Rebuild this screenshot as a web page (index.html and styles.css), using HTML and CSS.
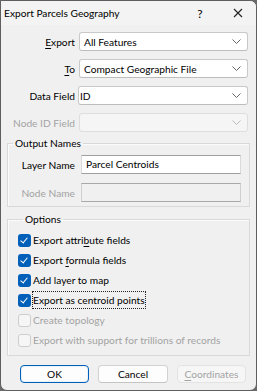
FILE: index.html
```html
<!DOCTYPE html>
<html lang="en">
<head>
    <meta charset="UTF-8">
    <meta name="viewport" content="width=device-width, initial-scale=1.0">
    <title>Export Parcels Geography</title>
    <link rel="stylesheet" href="styles.css">
</head>
<body>
    <div class="window">
        <div class="titlebar">
            <span class="title">Export Parcels Geography</span>
            <span class="help">?</span>
            <span class="close">
                <svg width="10" height="10" viewBox="0 0 10 10"><path d="M1 1L9 9M9 1L1 9" stroke="#222" stroke-width="1.1" fill="none"/></svg>
            </span>
        </div>
        <div class="content">
            <div class="fields">
                <label class="lbl"><u>E</u>xport</label>
                <div class="combo"><span>All Features</span><svg class="chev" width="9" height="5" viewBox="0 0 9 5"><path d="M0.5 0.5L4.5 4.5L8.5 0.5" stroke="#666" fill="none"/></svg></div>

                <label class="lbl"><u>T</u>o</label>
                <div class="combo"><span>Compact Geographic File</span><svg class="chev" width="9" height="5" viewBox="0 0 9 5"><path d="M0.5 0.5L4.5 4.5L8.5 0.5" stroke="#666" fill="none"/></svg></div>

                <label class="lbl">Data Field</label>
                <div class="combo tight"><span>ID</span><svg class="chev" width="9" height="5" viewBox="0 0 9 5"><path d="M0.5 0.5L4.5 4.5L8.5 0.5" stroke="#666" fill="none"/></svg></div>

                <label class="lbl disabled">Node ID Field</label>
                <div class="combo off"><span></span><svg class="chev" width="9" height="5" viewBox="0 0 9 5"><path d="M0.5 0.5L4.5 4.5L8.5 0.5" stroke="#bbb" fill="none"/></svg></div>
            </div>

            <fieldset class="group names">
                <legend>Output Names</legend>
                <div class="name-grid">
                    <label class="lbl">Layer Name</label>
                    <div class="textbox">Parcel Centroids</div>
                    <label class="lbl disabled">Node Name</label>
                    <div class="textbox off"></div>
                </div>
            </fieldset>

            <fieldset class="group options">
                <legend>Options</legend>
                <div class="check on"><span class="box"></span><span>Export attri<u>b</u>ute fields</span></div>
                <div class="check on"><span class="box"></span><span>Export <u>f</u>ormula fields</span></div>
                <div class="check on"><span class="box"></span><span>Add layer to map</span></div>
                <div class="check on"><span class="box"></span><span class="focus">Export as centroid points</span></div>
                <div class="check off"><span class="box"></span><span>Create topology</span></div>
                <div class="check off"><span class="box"></span><span>Export with support for trillions of records</span></div>
            </fieldset>

            <div class="buttons">
                <button class="btn default">OK</button>
                <button class="btn">Cancel</button>
                <button class="btn off"><u>C</u>oordinates</button>
            </div>
        </div>
    </div>
</body>
</html>
```

FILE: styles.css
```css
* { margin: 0; padding: 0; box-sizing: border-box; }
body {
    background: #6a6a6a;
    font-family: Lato, "Noto Sans", sans-serif;
    font-size: 10.2px;
    color: #000;
}
.window {
    width: 257px;
    height: 391px;
    background: #f0f0f0;
    border: 1px solid #5e5e5e;
    border-radius: 0 7px 7px 7px;
    overflow: hidden;
    display: flex;
    flex-direction: column;
}
.titlebar {
    height: 24px;
    flex: none;
    display: flex;
    align-items: center;
    background: #f3f3f3;
    padding-left: 3px;
}
.title { flex: 1; line-height: 16px; }
.help { width: 12px; margin-right: 27px; text-align: center; font-size: 12px; }
.close { width: 10px; height: 10px; margin-right: 13px; display: flex; }
.content { flex: 1; display: flex; flex-direction: column; padding-top: 7px; }

/* top fields */
.fields {
    display: grid;
    grid-template-columns: 74px 1fr;
    column-gap: 4px;
    row-gap: 8px;
    padding-right: 8px;
    align-items: center;
}
.lbl { text-align: right; line-height: 16px; white-space: nowrap; }
.disabled { color: #a3a3a3; }
u { text-decoration-thickness: 1px; text-underline-offset: 2px; }
.combo {
    height: 19px;
    background: #fff;
    border: 1px solid #c9c9c9;
    border-bottom-color: #bdbdbd;
    border-radius: 3px;
    display: flex;
    align-items: center;
    padding: 0 6px 0 4px;
}
.combo span { flex: 1; line-height: 16px; }
.combo.tight { padding-left: 1px; margin-left: -1px; }
.combo.off { background: #f5f5f5; border-color: #dedede; }
.chev { flex: none; }

/* group boxes */
.group {
    margin: 3px 6px 0 6px;
    border: 1px solid #d9d9d9;
    box-shadow: inset 1px 1px 0 #fbfbfb;
    min-width: 0;
}
.group legend {
    line-height: 16px;
    padding: 0 2px;
    margin-left: 5px;
}
.names { padding: 4px 8px 4px 0; }
.name-grid {
    display: grid;
    grid-template-columns: 67px 1fr;
    column-gap: 6px;
    row-gap: 9px;
    align-items: center;
}
.textbox {
    height: 19px;
    background: #fff;
    border: 1px solid #dadada;
    border-top-color: #a0a0a0;
    border-bottom-color: #a0a0a0;
    line-height: 16px;
    padding-left: 4px;
}
.textbox.off { background: #f0f0f0; border-color: #cfcfcf; border-top-color: #a8a8a8; border-bottom-color: #a8a8a8; }

.options { margin-top: 4px; padding: 3px 0 5px 10px; }
.check {
    height: 20px;
    display: flex;
    align-items: center;
    gap: 2px;
    line-height: 16px;
    white-space: nowrap;
}
.box {
    width: 13px;
    height: 13px;
    border-radius: 3px;
    flex: none;
    position: relative;
}
.check.on .box { background: #005fb8; }
.check.on .box::after {
    content: "";
    position: absolute;
    left: 4px;
    top: 2px;
    width: 3px;
    height: 6px;
    border: solid #fff;
    border-width: 0 1px 1px 0;
    transform: rotate(40deg);
}
.check.off .box { background: #f6f6f6; border: 1px solid #cdcdcd; }
.check.off { color: #a3a3a3; }
.focus { outline: 1px dotted #222; outline-offset: 0; }

/* buttons */
.buttons {
    display: flex;
    gap: 9px;
    padding: 9px 10px 0 19px;
}
.btn {
    height: 18px;
    font: inherit;
    line-height: 14px;
    background: #fdfdfd;
    border: 1px solid #d2d2d2;
    border-bottom-color: #c4c4c4;
    border-radius: 4px;
    color: #000;
    width: 71px;
}
.btn.default { width: 70px; border: 1px solid #005fb8; box-shadow: inset 0 0 0 1px #e8f0f8; }
.btn.off { color: #a3a3a3; background: #f6f6f6; border-color: #e3e3e3; width: 70px; }
.btn.off u { text-decoration-color: #a3a3a3; }
```
